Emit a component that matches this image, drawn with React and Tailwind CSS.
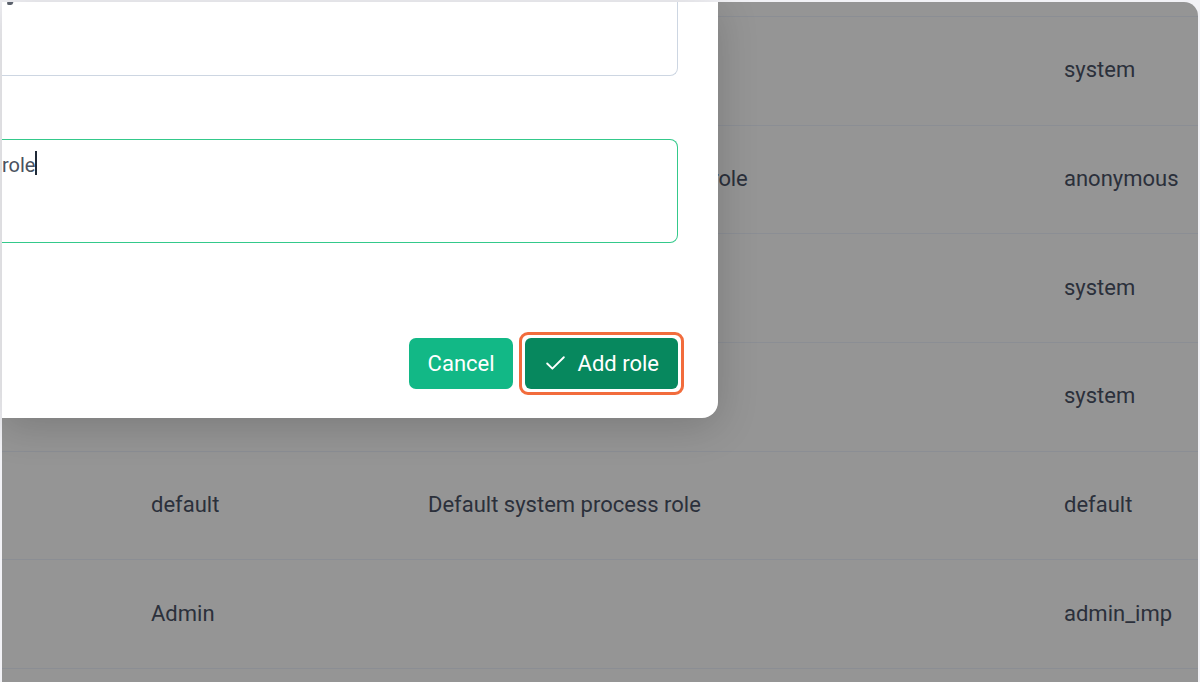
import { Check } from 'lucide-react';

const rows = [
  { name: '', desc: '', key: '' },
  { name: 'System', desc: 'System administrator role', key: 'system' },
  { name: 'Anonymous', desc: 'Unauthenticated anonymous role', key: 'anonymous', tight: true },
  { name: 'System', desc: 'System user role', key: 'system' },
  { name: 'System', desc: 'System service role', key: 'system' },
  { name: 'default', desc: 'Default system process role', key: 'default' },
  { name: 'Admin', desc: '', key: 'admin_imp' },
  { name: '', desc: '', key: '' },
];

function Row({ row, first }) {
  return (
    <div
      className={
        'flex items-center shrink-0 h-[108.67px] border-t border-[#8b8e94] text-[22px] text-[#2b303b] pb-[2px] ' +
        (first ? 'border-t-0' : '')
      }
    >
      <div className="w-[149px] shrink-0" />
      <div className="w-[277px] shrink-0 whitespace-nowrap">{row.name}</div>
      <div className={'w-[636px] shrink-0 whitespace-nowrap ' + (row.tight ? 'tracking-[-0.12px]' : '')}>
        {row.desc}
      </div>
      <div className="whitespace-nowrap">{row.key}</div>
    </div>
  );
}

export default function App() {
  return (
    <div
      className="relative w-[1200px] h-[682px] overflow-hidden bg-[#f2f2f6] pt-[2px] pl-[2px] pr-[2px]"
      style={{ fontFamily: 'Roboto, "Liberation Sans", sans-serif' }}
    >
      <div className="h-full overflow-hidden rounded-tr-[14px] bg-[#959595]">
        <div className="flex flex-col -mt-[94.67px]">
          {rows.map((row, i) => (
            <Row key={i} row={row} first={i === 0} />
          ))}
        </div>
      </div>

      {/* modal */}
      <div className="absolute left-[2px] top-[2px] w-[716px] h-[416px] bg-white rounded-br-[16px] shadow-[0_8px_40px_rgba(0,0,0,0.18)] pr-[40px] flex flex-col">
        <div className="h-[74px] border border-l-0 border-t-0 border-[#cdd6e2] rounded-br-[8px] relative">
          <div className="absolute left-[5px] top-0 w-[6px] h-[3px] bg-[#5a606b] rounded-b-[2px] -skew-x-12" />
        </div>
        <div className="h-[63px]" />
        <div className="h-[104px] border border-l-0 border-[#34c98b] rounded-r-[8px] pt-[10px] text-[20px] text-[#4a5260] flex items-start">
          <span>role</span>
          <span className="inline-block w-[1.5px] h-[24px] bg-[#1f2937] mt-[1px]" />
        </div>
        <div className="flex-1 flex items-end justify-end gap-[12px] pb-[29px]">
          <button className="h-[51px] pl-[19px] pr-[18px] rounded-[7px] bg-[#12b886] text-white text-[22px]">
            Cancel
          </button>
          <div className="rounded-[9px] border-[3px] border-[#f26c3c] p-[3px] -m-[6px]">
            <button className="h-[51px] pl-[18px] pr-[19px] rounded-[6px] bg-[#07885e] text-white text-[22px] flex items-center gap-[10px]">
              <Check size={25} strokeWidth={1.8} />
              <span>Add role</span>
            </button>
          </div>
        </div>
      </div>
    </div>
  );
}
